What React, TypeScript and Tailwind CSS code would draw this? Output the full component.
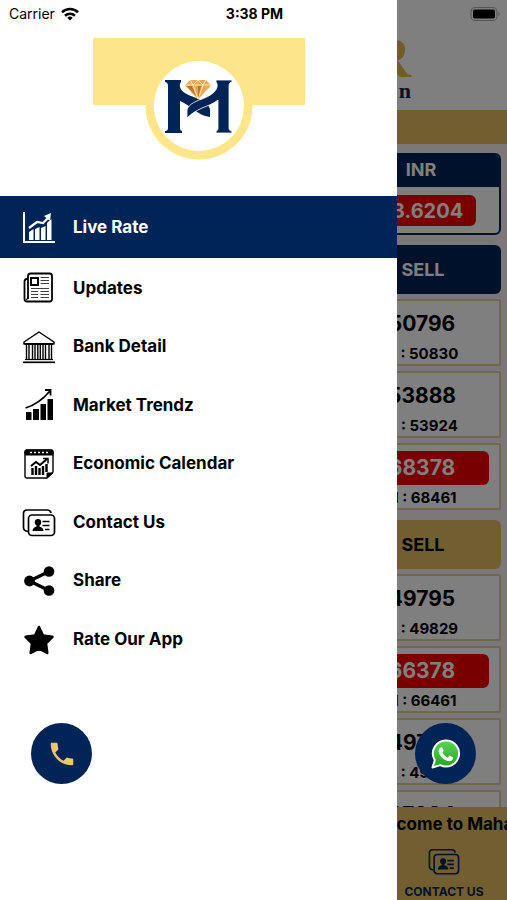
import React from 'react';

type IconProps = { className?: string };

const LiveRateIcon: React.FC<IconProps> = ({ className }) => (
  <svg viewBox="0 0 34 34" className={className} fill="currentColor">
    <path d="M1 1h2v29h30v2H1z" />
    <path d="M7 21l4.500-3v11H7zM13 18l4.500-2v13H13zM19 17l4.500-2v14H19zM25 12l4.500-4v21H25z" />
    <path d="M7 17l8-6 6 1 6-6" fill="none" stroke="currentColor" strokeWidth="2.200" />
    <path d="M22 5l7-3-1 8z" />
  </svg>
);

const NewsIcon: React.FC<IconProps> = ({ className }) => (
  <svg viewBox="0 0 34 34" className={className} fill="none" stroke="currentColor">
    <path d="M6 28V5q0-2.500 2.500-2.500h19Q30 2.500 30 5v23q0 2.500-2.500 2.500H5Q2.500 30.500 2.500 28V10.500Q2.500 8 6 7.500" strokeWidth="1.800" />
    <path d="M6 25q0 3-2 4" strokeWidth="1.200" />
    <rect x="9" y="7" width="7" height="7" strokeWidth="2" />
    <path d="M18.500 6.500H27M18.500 9.500H27M18.500 12.500H27M9 17.500h18M9 20.500h7M18.500 20.500H27M9 23.500h7M18.500 23.500H27M9 26.500h7M18.500 26.500H27" strokeWidth="1.200" opacity="0.750" />
  </svg>
);

const BankIcon: React.FC<IconProps> = ({ className }) => (
  <svg viewBox="0 0 34 34" className={className} fill="none" stroke="currentColor">
    <path d="M17 2L2 12v2h30v-2z" strokeWidth="1.500" strokeLinejoin="round" />
    <path d="M3 14h28" strokeWidth="2" />
    <path d="M4.500 15v14M7 15v14M10.500 15v14M13 15v14M15.800 15v14M18.300 15v14M21 15v14M23.500 15v14M27 15v14M29.500 15v14" strokeWidth="1.400" />
    <path d="M3 29.500h28" strokeWidth="1.200" />
    <path d="M1 32.300h32" strokeWidth="1.700" />
  </svg>
);

const TrendIcon: React.FC<IconProps> = ({ className }) => (
  <svg viewBox="0 0 34 34" className={className} fill="currentColor">
    <path d="M4 24h5.500v8H4zM11 21h6v11h-6zM18.500 16H24v16h-5.500zM25.500 11H31v21h-5.500z" />
    <path d="M3.500 20Q17 16 28 3M23 2h5.500v5.500" fill="none" stroke="currentColor" strokeWidth="1.800" />
  </svg>
);

const CalendarIcon: React.FC<IconProps> = ({ className }) => (
  <svg viewBox="0 0 34 34" className={className} fill="none" stroke="currentColor">
    <path d="M5 3h24q2 0 2 2v20l-6 6H5q-2 0-2-2V5q0-2 2-2z" strokeWidth="1.400" />
    <path d="M3 8V5q0-2 2-2h24q2 0 2 2v3zM25 31v-5h6z" fill="currentColor" />
    <path d="M8 5.500h18" stroke="white" strokeWidth="1.500" strokeDasharray="2 2" />
    <path d="M9 19l5-4 4 3 7-6" strokeWidth="2" />
    <path d="M21 11.500h5v5" strokeWidth="1.500" />
    <path d="M10.500 21v7M14 19v9M17.500 21v7M21 19v9M24.500 17v8" strokeWidth="2.400" />
  </svg>
);

const ContactIcon: React.FC<IconProps> = ({ className }) => (
  <svg viewBox="0 0 34 34" className={className} fill="none" stroke="currentColor">
    <rect x="6.500" y="9" width="26" height="20.500" rx="3.500" strokeWidth="1.700" />
    <path d="M6 25.500Q1.500 25 1.500 21.500V7.500Q1.500 4 5 4h20q3.500 0 4 3" strokeWidth="1.700" />
    <circle cx="16" cy="16.300" r="3.200" fill="currentColor" stroke="none" />
    <path d="M10.500 25q0-3.500 4-4.500v-2h3v2q4 1 4 4.500z" fill="currentColor" stroke="none" />
    <path d="M20.500 15.500h7M20.500 19.500h7M23 23.500h4.500" strokeWidth="1.700" />
  </svg>
);

const ShareIcon: React.FC<IconProps> = ({ className }) => (
  <svg viewBox="0 0 34 34" className={className} fill="currentColor">
    <path d="M27 7.500L7.500 17 27 26.500" fill="none" stroke="currentColor" strokeWidth="3.400" />
    <circle cx="27" cy="7.500" r="5.300" />
    <circle cx="7.500" cy="17" r="5.400" />
    <circle cx="27" cy="26.500" r="5.300" />
  </svg>
);

const StarIcon: React.FC<IconProps> = ({ className }) => (
  <svg viewBox="0 0 34 34" className={className} fill="currentColor" stroke="currentColor" strokeWidth="2.500" strokeLinejoin="round">
    <path d="M17 4l4 8.500 9.500 1.300-6.500 6.500 1.300 9.700-8.300-4.300L8.700 30 10 20.300l-6.500-6.500L13 12.500z" />
  </svg>
);

const MenuLogo: React.FC<IconProps> = ({ className }) => (
  <svg viewBox="0 0 212 122" className={className} role="img" aria-label="Logo">
    <path d="M0 0h212v67H0z" fill="#fde68a" />
    <circle cx="106" cy="68" r="53.500" fill="#fde68a" />
    <circle cx="106" cy="68" r="45" fill="#fff" />
    <g fill="#002456">
      <path d="M72 42h16v2c-1 1-1.500 3-1 5 1 5 8 8 16 11 8 3 14 7 14 12v7c-7-1-12-4-17-8-4-3-8-6-13-8v27c0 2 1 3 2 3v2H72v-2c2 0 3-1 3-3V48c0-2-1-4-3-4z" />
      <path d="M139 42h-16v2c1 1 1.500 3 1 5-1 5-7 9-15 12-9 3-15 7-15 12v7c5-5 9-7 15-10 5-2 11-4 16-8v28c0 2-1 3-2 3v2h16v-2c-2 0-3-1-3-3V48c0-2 1-4 3-4z" stroke="#fff" strokeWidth="0.800" />
    </g>
    <path d="M97 42h16l5 5.500-13 14-13-14z" fill="#e9a854" />
    <path d="M97 42l3 5 5-5 5 5 3-5M92 47h26M100 47l5 14 5-14" fill="none" stroke="#fff0bd" strokeWidth="0.900" />
    <path d="M94 48l9 10-4-10zM105 48v12l3-12z" fill="#b87328" />
  </svg>
);

const PhoneIcon: React.FC<IconProps> = ({ className }) => (
  <svg viewBox="0 0 24 24" className={className} fill="currentColor">
    <path d="M6.620 10.790c1.440 2.830 3.760 5.140 6.590 6.590l2.200-2.200c.270-.270.670-.360 1.020-.240 1.120.370 2.330.570 3.570.570.550 0 1 .450 1 1V20c0 .550-.450 1-1 1-9.390 0-17-7.610-17-17 0-.550.450-1 1-1h3.500c.550 0 1 .450 1 1 0 1.250.200 2.450.570 3.570.110.350.030.740-.250 1.020z" />
  </svg>
);

const WhatsAppIcon: React.FC<IconProps> = ({ className }) => (
  <svg viewBox="0 0 30 30" className={className}>
    <defs>
      <linearGradient id="wa" x1="0" y1="0" x2="0" y2="1">
        <stop offset="0" stopColor="#5fd35a" />
        <stop offset="1" stopColor="#1fa61f" />
      </linearGradient>
    </defs>
    <path d="M15.500 1.500a13 13 0 1 1-6.300 24.600L1.500 28.500l2.300-7.300A13 13 0 0 1 15.500 1.500z" fill="url(#wa)" stroke="#fff" strokeWidth="2" strokeLinejoin="round" />
    <path d="M11 8.200l1.700 3.500-1.300 1.900c1 2.300 2.800 3.900 5.200 4.900l1.900-2 3.600 1.800c.2 2.500-1.700 4-4 4-5.300-.7-9.800-5-10.500-10 0-2.400 1.500-4.300 3.400-4.100z" fill="#fff" />
  </svg>
);

const menu = [
  { label: 'Live Rate', icon: LiveRateIcon },
  { label: 'Updates', icon: NewsIcon },
  { label: 'Bank Detail', icon: BankIcon },
  { label: 'Market Trendz', icon: TrendIcon },
  { label: 'Economic Calendar', icon: CalendarIcon },
  { label: 'Contact Us', icon: ContactIcon },
  { label: 'Share', icon: ShareIcon },
  { label: 'Rate Our App', icon: StarIcon },
];

interface Rate {
  sell: string;
  high: string;
  down?: boolean;
}

const goldRates: Rate[] = [
  { sell: '50796', high: '50830' },
  { sell: '53888', high: '53924' },
  { sell: '68378', high: '68461', down: true },
];

const spotRates: Rate[] = [
  { sell: '49795', high: '49829' },
  { sell: '66378', high: '66461', down: true },
  { sell: '49795', high: '49829' },
  { sell: '67884', high: '67960' },
];

const RateCard: React.FC<{ rate: Rate }> = ({ rate }) => (
  <div className="flex justify-end h-[67px] shrink-0 bg-white border-2 border-[#e3cf98] rounded-xs">
    <div className="w-[154px] px-2.5 pt-1.5 text-center text-black">
      <p className={`h-[34px] leading-[34px] rounded-md text-[21px] font-bold ${rate.down ? 'bg-[#f00000] text-white' : ''}`}>
        {rate.sell}
      </p>
      <p className="mt-1 text-[15px] leading-[18px] font-bold whitespace-nowrap">H : {rate.high}</p>
    </div>
  </div>
);

const SectionBar: React.FC<{ className: string }> = ({ className }) => (
  <div className={`flex justify-end items-center h-[49px] shrink-0 rounded-md ${className}`}>
    <span className="w-[156px] text-center text-lg font-bold">SELL</span>
  </div>
);

const RatesPage: React.FC = () => (
  <main className="absolute inset-0 flex flex-col overflow-hidden bg-[#f8f1f3]">
    <header className="flex flex-col items-end h-[110px] shrink-0 bg-white pt-[34px] pr-24 font-['Liberation_Serif',serif]">
      <span className="text-[56px] leading-[48px] font-bold text-[#e3bd4b]">R</span>
      <span className="text-[22px] leading-[18px] font-bold text-[#002456]">n</span>
    </header>
    <div className="h-[34px] shrink-0 bg-[#e4bf62]" />
    <div className="flex flex-col flex-1 min-h-0 overflow-hidden px-1.5 pt-[9px]">
      <section className="shrink-0 rounded-md overflow-hidden border-2 border-[#002456] bg-white">
        <div className="flex justify-end h-8 bg-[#002456] text-white">
          <span className="w-[156px] text-center text-lg leading-[30px] font-bold">INR</span>
        </div>
        <div className="flex justify-end h-[46px]">
          <div className="w-[154px] px-[23px] pt-2">
            <p className="h-[31px] leading-[32px] rounded-md bg-[#f00000] text-center text-xl font-bold text-white">73.6204</p>
          </div>
        </div>
      </section>
      <SectionBar className="mt-2.5 bg-[#002456] text-white" />
      <div className="flex flex-col gap-[5px] mt-[5px]">
        {goldRates.map((rate) => <RateCard key={rate.sell} rate={rate} />)}
      </div>
      <SectionBar className="mt-2.5 bg-[#e4bf62] text-black" />
      <div className="flex flex-col gap-[5px] mt-[5px]">
        {spotRates.map((rate, i) => <RateCard key={i} rate={rate} />)}
      </div>
    </div>
    <footer className="h-[93px] shrink-0 overflow-hidden bg-[#e4bf62]">
      <p className="pl-[72%] pt-[5px] text-[17px] leading-6 font-bold whitespace-nowrap">Welcome to Maharana</p>
      <a href="#contact" className="ml-auto flex flex-col items-center w-[126px] pt-2.5 text-[#002456]">
        <ContactIcon className="w-8 h-8" />
        <span className="mt-1.5 text-xs font-bold whitespace-nowrap">CONTACT US</span>
      </a>
    </footer>
    <div className="absolute inset-0 bg-black/50" />
  </main>
);

const Drawer: React.FC = () => (
  <aside className="absolute inset-y-0 left-0 w-[78.3%] bg-white">
    <div className="flex justify-center pt-[38px] pl-0.5">
      <MenuLogo className="w-[212px] h-[122px]" />
    </div>
    <nav className="mt-9">
      <ul className="flex flex-col h-[472px]">
        {menu.map(({ label, icon: Icon }, i) => (
          <li key={label} className={i === 0 ? 'h-[62px]' : 'flex-1'}>
            <a
              href="#"
              className={`flex items-center h-full gap-[17px] pl-[22px] pt-0.5 text-[17px] font-bold ${
                i === 0 ? 'bg-[#002456] text-white' : 'text-black'
              }`}
            >
              <Icon className="w-[34px] h-[34px]" />
              <span>{label}</span>
            </a>
          </li>
        ))}
      </ul>
    </nav>
  </aside>
);

const StatusBar: React.FC = () => (
  <div className="absolute inset-x-0 top-0 grid grid-cols-3 items-center h-7 pl-[9px] pr-[7px] text-sm text-black">
    <div className="flex items-center gap-1.5">
      <span>Carrier</span>
      <svg viewBox="0 0 18 14" className="w-[18px] h-3.5" fill="none" stroke="currentColor" strokeWidth="2.600">
        <path d="M1 5.300a11.500 11.500 0 0 1 16 0M4 8.800a7.300 7.300 0 0 1 10 0" />
        <path d="M9 13.500l-2.700-2.700a4 4 0 0 1 5.400 0z" fill="currentColor" stroke="none" />
      </svg>
    </div>
    <span className="text-center font-bold">3:38 PM</span>
    <svg viewBox="0 0 30 14" className="w-[30px] h-3.5 justify-self-end">
      <rect x="1" y="0.500" width="26" height="13" rx="4" fill="none" stroke="#555" />
      <rect x="3" y="2.500" width="22" height="9" rx="2" />
      <path d="M28.500 4.500q2 2.500 0 5z" fill="#555" />
    </svg>
  </div>
);

export default function App() {
  return (
    <div className="relative min-h-screen overflow-hidden font-[Inter,sans-serif]">
      <RatesPage />
      <Drawer />
      <StatusBar />
      <div className="absolute inset-x-0 bottom-[116px] flex justify-between px-[31px]">
        <button aria-label="Call" className="flex items-center justify-center size-[61px] rounded-full bg-[#002456] text-[#efc66b]">
          <PhoneIcon className="w-[30px] h-[30px]" />
        </button>
        <button aria-label="WhatsApp" className="flex items-center justify-center size-[61px] rounded-full bg-[#002456]">
          <WhatsAppIcon className="w-[30px] h-[30px]" />
        </button>
      </div>
    </div>
  );
}
